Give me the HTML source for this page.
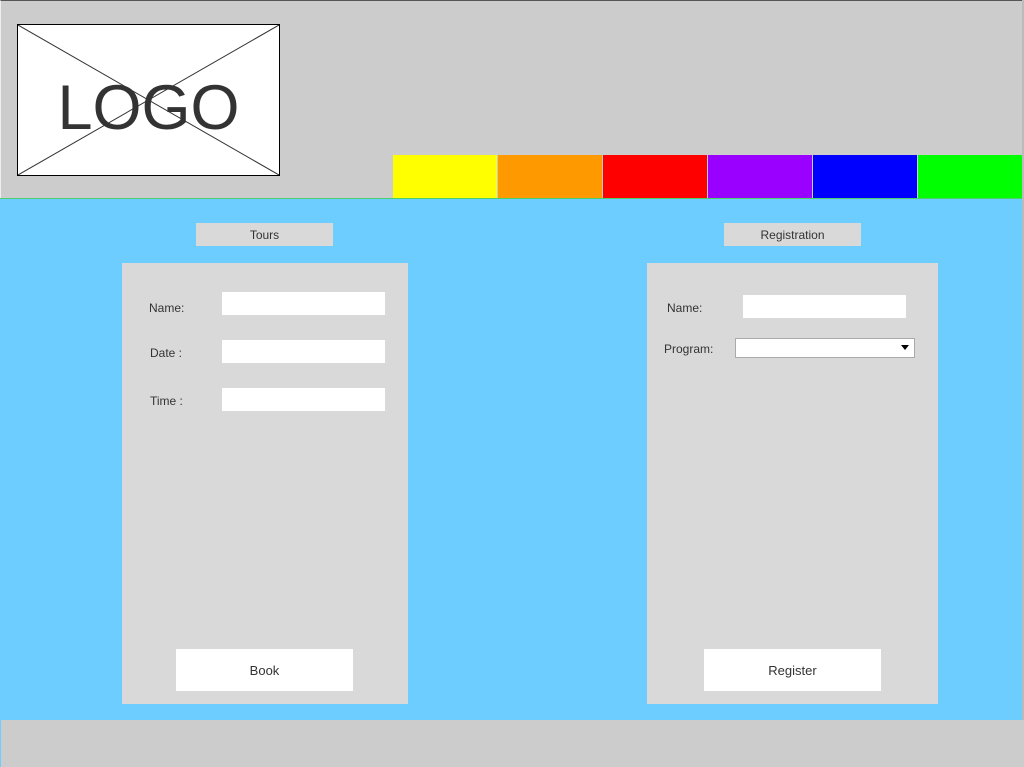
<!DOCTYPE html>
<html><head><style>
*{margin:0;padding:0;box-sizing:border-box}
body{width:1024px;height:767px;position:relative;overflow:hidden;background:#6ccdfe;font-family:"Liberation Sans",Arial,sans-serif;color:#333;font-size:12px}
.a{position:absolute}
.lbl{position:absolute;font-size:12px;color:#333}
.in{position:absolute;background:#fff;height:23px}
.btn{position:absolute;background:#fff;text-align:center;font-size:13px}
.tab{position:absolute;background:#d9d9d9;text-align:center;line-height:25px;font-size:12px}
</style></head><body>
<div class="a" style="left:0;top:0;width:1024px;height:199px;background:#ccc;border-top:1px solid #555;border-left:1px solid #eee"></div>
<div class="a" style="left:0;top:198px;width:1024px;height:1px;background:#4ad06a"></div>
<div class="a" style="left:1022px;top:0;width:2px;height:767px;background:#bbb"></div>
<div class="a" style="left:17px;top:24px;width:263px;height:152px;background:#fff;border:1px solid #000">
<svg width="261" height="150" style="position:absolute;left:0;top:0"><line x1="0" y1="0" x2="261" y2="150" stroke="#333" stroke-width="1"/><line x1="261" y1="0" x2="0" y2="150" stroke="#333" stroke-width="1"/></svg>
<div class="a" style="left:0;top:49px;width:261px;text-align:center;font-size:63px;line-height:68px;color:#333">LOGO</div>
</div>
<div class="a" style="left:393px;top:155px;width:104px;height:43px;background:#ff0"></div>
<div class="a" style="left:498px;top:155px;width:104px;height:43px;background:#f90"></div>
<div class="a" style="left:603px;top:155px;width:104px;height:43px;background:#f00"></div>
<div class="a" style="left:708px;top:155px;width:104px;height:43px;background:#90f"></div>
<div class="a" style="left:813px;top:155px;width:104px;height:43px;background:#00f"></div>
<div class="a" style="left:918px;top:155px;width:104px;height:43px;background:#0f0"></div>

<div class="tab" style="left:196px;top:223px;width:137px;height:23px">Tours</div>
<div class="a" style="left:122px;top:263px;width:286px;height:441px;background:#d9d9d9"></div>
<div class="lbl" style="left:149px;top:301px">Name:</div>
<div class="in" style="left:222px;top:292px;width:163px"></div>
<div class="lbl" style="left:150px;top:346px">Date :</div>
<div class="in" style="left:222px;top:340px;width:163px"></div>
<div class="lbl" style="left:150px;top:394px">Time :</div>
<div class="in" style="left:222px;top:388px;width:163px"></div>
<div class="btn" style="left:176px;top:649px;width:177px;height:42px;line-height:44px">Book</div>

<div class="tab" style="left:724px;top:223px;width:137px;height:23px">Registration</div>
<div class="a" style="left:647px;top:263px;width:291px;height:441px;background:#d9d9d9"></div>
<div class="lbl" style="left:667px;top:301px">Name:</div>
<div class="in" style="left:743px;top:295px;width:163px"></div>
<div class="lbl" style="left:664px;top:342px">Program:</div>
<div class="a" style="left:735px;top:338px;width:180px;height:20px;background:#fff;border:1px solid #aaa">
<div class="a" style="left:165px;top:6px;width:0;height:0;border-left:4px solid transparent;border-right:4px solid transparent;border-top:5px solid #000"></div></div>
<div class="btn" style="left:704px;top:649px;width:177px;height:42px;line-height:44px">Register</div>

<div class="a" style="left:1px;top:720px;width:1023px;height:47px;background:#ccc"></div>
</body></html>
